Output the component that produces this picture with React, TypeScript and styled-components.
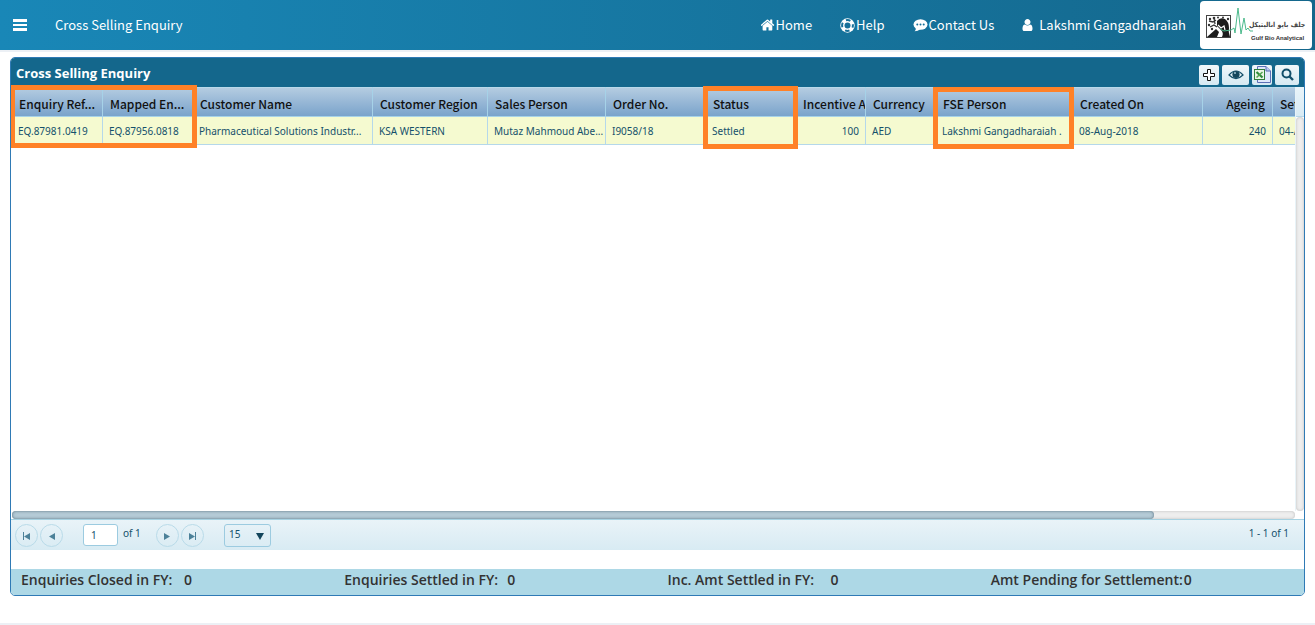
import React from "react";
import styled, { createGlobalStyle } from "styled-components";

const Global = createGlobalStyle`
  * { box-sizing: border-box; }
  body { margin: 0; background: #fff; font-family: "Noto Sans", "Open Sans", sans-serif; }
  button, input, select { font: inherit; color: inherit; margin: 0; }
`;

const Page = styled.div`
  display: flex;
  flex-direction: column;
  min-height: 100vh;
  border-bottom: 2px solid #ecf0f5;
`;

const TopBar = styled.header`
  display: flex;
  align-items: center;
  height: 52px;
  flex: none;
  padding: 0 3px 0 13px;
  border-bottom: 2px solid #ecf0f5;
  background: linear-gradient(90deg, #1987b7, #14678c) padding-box;
  color: #fff;
  font-family: "Noto Sans CJK SC", "Noto Sans", sans-serif;
  font-size: 13px;
  line-height: 20px;
`;

const MenuButton = styled.button`
  display: flex;
  padding: 0;
  border: 0;
  background: none;
  margin-right: 28px;
`;

const PageName = styled.span`
  flex: 1;
`;

const Nav = styled.nav`
  display: flex;
  align-items: center;
  gap: 28px;
  margin-right: 14px;
`;

const NavLink = styled.a<{ $gap?: number }>`
  display: flex;
  align-items: center;
  gap: ${(p) => p.$gap ?? 1}px;
  color: #fff;
  text-decoration: none;
  white-space: nowrap;
`;

const Logo = styled.a`
  display: flex;
  height: 48px;
  width: 112px;
  border-radius: 4px;
  background: #fff;
`;

const Panel = styled.main`
  display: flex;
  flex-direction: column;
  flex: 1;
  margin: 5px 10px 27px;
  border: 1px solid #2f7ab5;
  border-radius: 5px;
  overflow: hidden;
`;

const TitleBar = styled.div`
  display: flex;
  align-items: center;
  justify-content: space-between;
  height: 29px;
  padding: 0 5px;
  background: #14678c;
  color: #fff;
`;

const Title = styled.h1`
  margin: 0;
  font-family: "Open Sans", "Noto Sans", sans-serif;
  font-size: 13px;
  line-height: 20px;
  font-weight: 700;
`;

const Tools = styled.div`
  display: flex;
  gap: 3px;
  padding-top: 4px;
`;

const Tool = styled.button<{ $w: number }>`
  display: flex;
  align-items: center;
  justify-content: center;
  width: ${(p) => p.$w}px;
  height: 20px;
  padding: 0;
  border: 0;
  border-radius: 2px;
  background: linear-gradient(#f1f7fa, #d5e9f2);
`;

const Grid = styled.section`
  position: relative;
  display: grid;
  grid-template-columns: minmax(0, 1fr) 9px;
  grid-template-rows: minmax(0, 1fr) 8px;
  flex: 1;
  padding-left: 1px;
`;

const Viewport = styled.div`
  overflow: hidden;
`;

const Table = styled.table`
  table-layout: fixed;
  width: 1400px;
  border-collapse: separate;
  border-spacing: 0;
`;

const HeadCell = styled.th<{ $right?: boolean }>`
  height: 30px;
  padding: 4px 7px 0;
  border-right: 1px solid #a6d2e8;
  border-bottom: 1px solid #a6d2e8;
  border-top: 1px solid #b9d9ea;
  background: linear-gradient(#b4cce1, #7aa3cb);
  color: #111;
  font-family: "Noto Sans CJK SC", "Noto Sans", sans-serif;
  font-size: 12px;
  line-height: 16px;
  font-weight: 500;
  text-align: ${(p) => (p.$right ? "right" : "left")};
  white-space: nowrap;
  overflow: hidden;
`;

const Cell = styled.td<{ $right?: boolean }>`
  height: 28px;
  padding: 0 6px;
  border-right: 1px solid #b5d8ea;
  border-bottom: 1px solid #b5d8ea;
  background: #f5fad0;
  color: #14506b;
  font-size: 10px;
  line-height: 16px;
  text-align: ${(p) => (p.$right ? "right" : "left")};
  white-space: nowrap;
  overflow: hidden;
`;

const VerticalRail = styled.div`
  display: flex;
  flex-direction: column;
  border-left: 1px solid #e8f3f8;
`;

const RailCap = styled.div`
  height: 30px;
  border-bottom: 1px solid #b5d8ea;
  background: linear-gradient(#e9f4f9, #d9ebf4);
`;

const VerticalTrack = styled.div`
  flex: 1;
  width: 8px;
  border-radius: 4px;
  background: #eee;
  box-shadow: inset 0 0 3px #bbb;
`;

const HorizontalTrack = styled.div`
  border-radius: 4px;
  background: #eee;
  box-shadow: inset 0 0 3px #bbb;
`;

const Thumb = styled.div`
  width: 89%;
  height: 8px;
  border-radius: 4px;
  background: #b4cad6;
  box-shadow: inset 0 0 3px #56707e;
`;

const Highlight = styled.div<{ $x: number; $y: number; $w: number; $h: number }>`
  position: absolute;
  left: ${(p) => p.$x}px;
  top: ${(p) => p.$y}px;
  width: ${(p) => p.$w}px;
  height: ${(p) => p.$h}px;
  border: 5px solid #ff8127;
  pointer-events: none;
`;

const Pager = styled.div`
  display: flex;
  align-items: center;
  height: 31px;
  padding: 0 15px 0 4px;
  border-top: 1px solid #a6d2e2;
  background: linear-gradient(#e9f3f8, #d8ebf3);
  color: #14506b;
  font-size: 10px;
  line-height: 16px;
`;

const PageButton = styled.button`
  display: flex;
  align-items: center;
  justify-content: center;
  width: 23px;
  height: 23px;
  padding: 0;
  margin-right: 2px;
  border: 1px solid #b9dbe9;
  border-radius: 50%;
  background: none;
`;

const PagerText = styled.span`
  padding-bottom: 4px;
`;

const PageField = styled.label`
  display: flex;
  align-items: center;
  gap: 5px;
  width: 73px;
  margin-left: 18px;
  white-space: nowrap;
`;

const PageInput = styled.input`
  width: 35px;
  height: 22px;
  padding: 0 7px;
  border: 1px solid #9ccbe0;
  border-radius: 3px;
  background: #fff;
`;

const SizeField = styled.label`
  display: grid;
  align-items: center;
  margin-left: 18px;
  svg { grid-area: 1 / 1; justify-self: end; margin: 2px 7px 0 0; pointer-events: none; }
`;

const SizeSelect = styled.select`
  grid-area: 1 / 1;
  appearance: none;
  width: 47px;
  height: 23px;
  padding: 0 4px 2px;
  border: 1px solid #9ccbe0;
  border-radius: 3px;
  background: transparent;
`;

const Range = styled(PagerText)`
  margin-left: auto;
`;

const Totals = styled.dl`
  display: grid;
  grid-template-columns: repeat(4, 1fr);
  margin: 19px 0 0;
  height: 26px;
  background: #add8e6;
  color: #333;
  font-family: "Open Sans", "Noto Sans", sans-serif;
  font-size: 14px;
  line-height: 22px;
  font-weight: 600;
`;

const Total = styled.div`
  display: flex;
  gap: 1px;
  padding-left: 10px;
  white-space: nowrap;
  dt { min-width: 162px; }
  dd { margin: 0; }
`;

const FA: React.FC<{ d: string; w: number; h: number; box: string }> = ({ d, w, h, box }) => (
  <svg width={w} height={h} viewBox={box} fill="#fff" aria-hidden="true"><path d={d} /></svg>
);

const HOME = "M1408 992v480q0 26-19 45t-45 19h-384v-384h-256v384h-384q-26 0-45-19t-19-45v-480q0-1 .5-3t.5-3l575-474 575 474q1 2 1 6zm223-69l-62 74q-8 9-21 11h-3q-13 0-21-7l-692-577-692 577q-12 8-24 7-13-2-21-11l-62-74q-8-10-7-23.5t11-21.5l719-599q32-26 76-26t76 26l244 204v-195q0-14 9-23t23-9h192q14 0 23 9t9 23v408l219 182q10 8 11 21.5t-7 23.5z";
const USER = "M1536 1399q0 109-62.5 187t-150.5 78h-854q-88 0-150.5-78t-62.5-187q0-85 8.5-160.5t31.5-152 58.5-131 94-89 134.5-34.5q131 128 313 128t313-128q76 0 134.5 34.5t94 89 58.5 131 31.5 152 8.5 160.5zm-256-887q0 159-112.5 271.5t-271.5 112.5-271.5-112.5-112.5-271.5 112.5-271.5 271.5-112.5 271.5 112.5 112.5 271.5z";

const RingIcon = () => (
  <svg width="15" height="15" viewBox="0 0 15 15" fill="none" aria-hidden="true">
    <circle cx="7.5" cy="7.5" r="7.2" fill="#fff" />
    <g stroke="#16709a" strokeWidth="2" strokeDasharray="4.6 3.9">
      <circle cx="7.5" cy="7.5" r="5.4" strokeDashoffset="2.3" />
    </g>
    <circle cx="7.5" cy="7.5" r="3" fill="#16709a" />
  </svg>
);

const ChatIcon = () => (
  <svg width="15" height="14" viewBox="0 0 15 14" aria-hidden="true">
    <ellipse cx="7.5" cy="6.5" rx="7" ry="5.2" fill="#fff" />
    <path d="M3 9.5Q3 12 1.6 13.2Q5 13.200 7.500 11z" fill="#fff" />
    <g fill="#16709a"><circle cx="4.3" cy="6.5" r="1" /><circle cx="7.5" cy="6.5" r="1" /><circle cx="10.7" cy="6.5" r="1" /></g>
  </svg>
);

const LogoMark = () => (
  <svg width="112" height="48" viewBox="0 0 112 48" role="img" aria-label="Gulf Bio Analytical">
    <rect x="6.5" y="14.5" width="24" height="22" fill="#fff" stroke="#444" />
    <path d="M17 20Q20 16 25 18Q29 21 29 27Q28 31 30 36H22Q24 32 21 29L17 25z" fill="#1c1c1c" />
    <path d="M7 36L16 28L19 31L17 36z" fill="#1c1c1c" />
    <g fill="#333">
      <circle cx="10" cy="18" r="1.2" /><circle cx="14" cy="17" r="1.3" /><circle cx="18" cy="16.500" r="1" />
      <circle cx="23" cy="16.500" r="1" /><circle cx="28" cy="18" r="1.2" /><circle cx="9" cy="24" r="1.2" /><circle cx="12" cy="28" r="1.2" />
    </g>
    <path d="M9 20L13 21L16 19M10 26L14 24L17 26M14 17L15 23" fill="none" stroke="#333" strokeWidth="1.3" />
    <path d="M18 24L21 27L24 25L25 29" fill="none" stroke="#fff" strokeWidth="1.2" />
    <path d="M20 28L24 30L31 29L34 27L35 32L38 7L41 33L44 17L46 29L48 27L50 30H53" fill="none" stroke="#4cba8c" strokeWidth="1" />
    <text x="49" y="26" fontFamily="DejaVu Sans Condensed, DejaVu Sans, sans-serif" fontSize="7" fontWeight="700" fill="#444">جلف بايو اناليتيكل</text>
    <text x="51" y="39" fontFamily="Liberation Sans, sans-serif" fontSize="6" fontWeight="700" fill="#333">Gulf Bio Analytical</text>
  </svg>
);

const Arrow: React.FC<{ flip?: boolean; bar?: boolean }> = ({ flip, bar }) => (
  <svg width="9" height="9" viewBox="0 0 9 9" fill="#4c8199" aria-hidden="true">
    <g transform={flip ? "matrix(-1 0 0 1 9 0)" : undefined}>
      <path d="M1 2L7 5.5L1 9z" />
      {bar && <rect x="7" y="1" width="1" height="8" />}
    </g>
  </svg>
);

type Column = { name: string; value: string; width: number; right?: boolean; headLeft?: boolean };

const columns: Column[] = [
  { name: "Enquiry Ref...", value: "EQ.87981.0419", width: 91 },
  { name: "Mapped En...", value: "EQ.87956.0818", width: 90 },
  { name: "Customer Name", value: "Pharmaceutical Solutions Industr...", width: 180 },
  { name: "Customer Region", value: "KSA WESTERN", width: 115 },
  { name: "Sales Person", value: "Mutaz Mahmoud Abe...", width: 118 },
  { name: "Order No.", value: "I9058/18", width: 100 },
  { name: "Status", value: "Settled", width: 90 },
  { name: "Incentive Amount", value: "100", width: 70, right: true, headLeft: true },
  { name: "Currency", value: "AED", width: 70 },
  { name: "FSE Person", value: "Lakshmi Gangadharaiah .", width: 137 },
  { name: "Created On", value: "08-Aug-2018", width: 130 },
  { name: "Ageing", value: "240", width: 70, right: true },
  { name: "Settled On", value: "04-Apr-2019", width: 139 },
];

const totals = ["Enquiries Closed in FY:", "Enquiries Settled in FY:", "Inc. Amt Settled in FY:", "Amt Pending for Settlement:"];

export default function App() {
  return (
    <Page>
      <Global />
      <TopBar>
        <MenuButton aria-label="Menu">
          <svg width="14" height="12" viewBox="0 0 14 12" fill="#fff"><path d="M0 0h14v3H0zM0 5h14v2H0zM0 9h14v3H0z" /></svg>
        </MenuButton>
        <PageName>Cross Selling Enquiry</PageName>
        <Nav>
          <NavLink href="#home"><FA d={HOME} w={14} h={12} box="64 192 1664 1408" />Home</NavLink>
          <NavLink href="#help"><RingIcon />Help</NavLink>
          <NavLink href="#contact"><ChatIcon />Contact Us</NavLink>
          <NavLink href="#profile" $gap={6}><FA d={USER} w={11} h={12} box="256 128 1280 1536" />Lakshmi Gangadharaiah</NavLink>
        </Nav>
        <Logo href="#company"><LogoMark /></Logo>
      </TopBar>
      <Panel>
        <TitleBar>
          <Title>Cross Selling Enquiry</Title>
          <Tools>
            <Tool $w={20} aria-label="Add">
              <svg width="14" height="14" viewBox="0 0 14 14"><path d="M5.5 1.5h3v4h4v3h-4v4h-3v-4h-4v-3h4z" fill="#fff" stroke="#111" /></svg>
            </Tool>
            <Tool $w={27} aria-label="View">
              <svg width="16" height="12" viewBox="0 0 16 12">
                <path d="M1 6Q8-2 15 6Q8 13 1 6z" fill="#e6f2f7" stroke="#14506b" strokeWidth="1.2" />
                <circle cx="8" cy="5.5" r="3.6" fill="#14465c" /><circle cx="7" cy="4" r="1" fill="#9fc3d2" />
              </svg>
            </Tool>
            <Tool $w={20} aria-label="Export to Excel">
              <svg width="18" height="17" viewBox="0 0 18 17">
                <path d="M4.5.5H13L17.5 5V16.5H4.5z" fill="#dfe8fb" stroke="#5c6fb5" />
                <path d="M13 .5V5h4.5" fill="#b9c8ee" stroke="#5c6fb5" />
                <rect x="1.5" y="3.5" width="10" height="10" fill="#eaf5e6" stroke="#2f7d3a" />
                <path d="M3.5 6L9.5 11.5" stroke="#2f8a3c" strokeWidth="2.2" />
                <path d="M9.5 6L3.5 11.5" stroke="#57a552" strokeWidth="1.6" />
              </svg>
            </Tool>
            <Tool $w={24} aria-label="Search">
              <svg width="13" height="13" viewBox="0 0 13 13" fill="none" stroke="#14506b" strokeWidth="2">
                <circle cx="5.5" cy="5.5" r="4" /><path d="M8.5 8.5L12 12" strokeWidth="2.4" />
              </svg>
            </Tool>
          </Tools>
        </TitleBar>
        <Grid>
          <Viewport>
            <Table>
              <colgroup>{columns.map((c) => <col key={c.name} style={{ width: c.width }} />)}</colgroup>
              <thead>
                <tr>{columns.map((c) => <HeadCell key={c.name} scope="col" $right={c.right && !c.headLeft}>{c.name}</HeadCell>)}</tr>
              </thead>
              <tbody>
                <tr>{columns.map((c) => <Cell key={c.name} $right={c.right}>{c.value}</Cell>)}</tr>
              </tbody>
            </Table>
          </Viewport>
          <VerticalRail><RailCap /><VerticalTrack /></VerticalRail>
          <HorizontalTrack><Thumb /></HorizontalTrack>
          <Highlight $x={-1} $y={-2} $w={187} $h={63} />
          <Highlight $x={692} $y={-1} $w={95} $h={63} />
          <Highlight $x={922} $y={0} $w={141} $h={62} />
        </Grid>
        <Pager>
          <PageButton aria-label="First page"><Arrow flip bar /></PageButton>
          <PageButton aria-label="Previous page"><Arrow flip /></PageButton>
          <PageField><PageInput aria-label="Page" defaultValue="1" /><PagerText>of 1</PagerText></PageField>
          <PageButton aria-label="Next page"><Arrow /></PageButton>
          <PageButton aria-label="Last page"><Arrow bar /></PageButton>
          <SizeField>
            <SizeSelect aria-label="Rows per page" defaultValue="15"><option>15</option><option>30</option><option>50</option></SizeSelect>
            <svg width="8" height="7" viewBox="0 0 8 7" fill="#14465c"><path d="M0 0h8L4 7z" /></svg>
          </SizeField>
          <Range>1 - 1 of 1</Range>
        </Pager>
        <Totals>
          {totals.map((t) => <Total key={t}><dt>{t}</dt><dd>0</dd></Total>)}
        </Totals>
      </Panel>
    </Page>
  );
}
